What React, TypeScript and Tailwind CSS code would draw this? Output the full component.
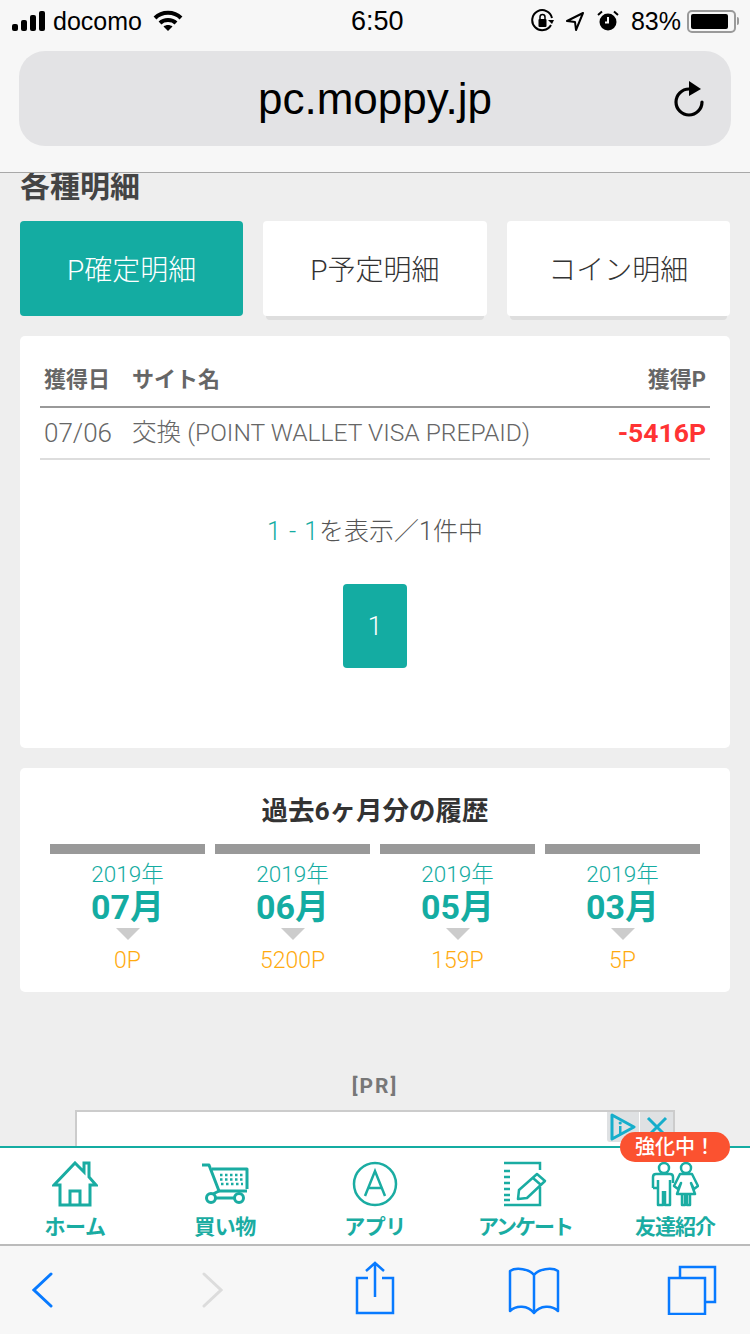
import React from 'react'

const jp = "font-['Roboto','Noto_Sans_CJK_JP',sans-serif]"

function StatusBar() {
  return (
    <div className="flex h-[42px] items-center pl-3 pr-[11px] font-['Liberation_Sans',sans-serif] text-[25px] leading-none text-black">
      <div className="flex w-[339px] items-center">
        <svg width="36" height="22" viewBox="0 0 36 22" fill="#000">
          <rect x="0" y="14" width="6" height="7" rx="2" />
          <rect x="9" y="10" width="6" height="11" rx="2" />
          <rect x="18" y="5" width="6" height="16" rx="2" />
          <rect x="27" y="1" width="6" height="20" rx="2" />
        </svg>
        <span className="ml-[5px]">docomo</span>
        <svg className="ml-[11px]" width="30" height="22" viewBox="0 0 30 22" fill="none" stroke="#000" strokeWidth="4">
          <path d="M2 8 C9 1 21 1 28 8" />
          <path d="M7 13 C11 9 19 9 23 13" />
          <path d="M15 21 L10.5 16.5 C13 14.5 17 14.5 19.5 16.5 Z" fill="#000" stroke="none" />
        </svg>
      </div>
      <span className="text-[27px] font-medium">6:50</span>
      <div className="flex flex-1 items-center justify-end">
        <svg width="24" height="24" viewBox="0 0 24 24" fill="none" stroke="#000" strokeWidth="2">
          <path d="M20 16 A10 10 0 1 1 21 9" />
          <path d="M21 15 L17 11 L23 11 Z" fill="#000" stroke="none" />
          <rect x="7.5" y="10" width="8" height="8" rx="1" fill="#000" stroke="none" />
          <path d="M9 10 V8 a2.5 2.5 0 0 1 5 0 V10" strokeWidth="1.5" />
        </svg>
        <svg className="ml-[10px]" width="20" height="22" viewBox="0 0 20 22" fill="none" stroke="#000" strokeWidth="2">
          <path d="M18 3 L2 11 L10 12 L11 20 Z" strokeLinejoin="round" />
        </svg>
        <svg className="ml-[12px]" width="22" height="22" viewBox="0 0 22 22">
          <circle cx="11" cy="12" r="8.5" fill="#000" />
          <path d="M11 7 V12.5 H8" fill="none" stroke="#f7f7f7" strokeWidth="2" />
          <path d="M1 5 L5 1.5 M21 5 L17 1.5" stroke="#000" strokeWidth="2" />
        </svg>
        <span className="ml-[12px]">83%</span>
        <div className="ml-[6px] flex h-[23px] w-[49px] items-center rounded-[5px] border-2 border-[#9a9a9a] p-[2px]">
          <div className="h-full w-[37px] rounded-[2px] bg-black" />
        </div>
        <div className="ml-[1px] h-[8px] w-[2px] rounded-r bg-[#9a9a9a]" />
      </div>
    </div>
  )
}

function UrlBar() {
  return (
    <div className="relative mx-[19px] mt-[9px] flex h-[95px] items-center justify-center rounded-[26px] bg-[#e3e3e5]">
      <span className="font-['Liberation_Sans',sans-serif] text-[44px] leading-none text-black">pc.moppy.jp</span>
      <svg className="absolute right-[25px] top-[28px]" width="32" height="40" viewBox="0 0 32 40" fill="none">
        <path d="M15 9 A13 13 0 1 0 28 22" stroke="#000" strokeWidth="3.2" strokeLinecap="round" transform="translate(0 1)" />
        <path d="M15 2 L27 10 L15 17 Z" fill="#000" />
      </svg>
    </div>
  )
}

function Tabs() {
  const tabs = ['P確定明細', 'P予定明細', 'コイン明細']
  return (
    <div className="mx-[20px] mt-[18px] grid grid-cols-3 gap-[20px]">
      {tabs.map((t, i) => (
        <div key={t} className="relative h-[95px]">
          {i > 0 && <div className="absolute -bottom-[4px] left-[3px] right-[3px] h-[6px] rounded-b bg-[#dedede]" />}
          <div
            className={
              i === 0
                ? 'relative flex h-full items-center justify-center rounded-[4px] bg-[#14aca2] pt-[4px] text-[28px] font-light text-white'
                : 'relative flex h-full items-center justify-center rounded-[4px] bg-white pt-[4px] text-[28px] font-light text-[#333]'
            }
          >
            {t}
          </div>
        </div>
      ))}
    </div>
  )
}

function DetailCard() {
  return (
    <div className="mx-[20px] mt-[20px] h-[412px] rounded-[5px] bg-white px-[20px]">
      <div className="flex h-[72px] items-end justify-between border-b-2 border-[#999] px-[4px] pb-[11px] text-[22px] leading-[30px] font-bold text-[#666]">
        <div className="flex">
          <span className="w-[88px]">獲得日</span>
          <span>サイト名</span>
        </div>
        <span>獲得P</span>
      </div>
      <div className="flex h-[52px] items-center justify-between border-b-2 border-[#ddd] px-[4px] text-[#666]">
        <div className="flex items-center font-light">
          <span className="w-[88px] text-[26px]">07/06</span>
          <span className="text-[24.6px]">交換 (POINT WALLET VISA PREPAID)</span>
        </div>
        <span className="text-[26.5px] font-bold text-[#ff3333]">-5416P</span>
      </div>
      <p className="mt-[54px] text-center text-[25px] leading-[36px] font-light text-[#555]">
        <span className="tracking-[1px] text-[#14aca2]">1 - 1</span>を表示／1件中
      </p>
      <div className="mt-[34px] flex justify-center">
        <div className="flex h-[84px] w-[64px] items-center justify-center rounded-[4px] bg-[#14aca2] text-[26px] font-light text-white">
          1
        </div>
      </div>
    </div>
  )
}

function HistoryCard() {
  const months = [
    { m: '07月', p: '0P' },
    { m: '06月', p: '5200P' },
    { m: '05月', p: '159P' },
    { m: '03月', p: '5P' },
  ]
  return (
    <div className="mx-[20px] mt-[20px] h-[224px] rounded-[5px] bg-white px-[30px] pt-[24px]">
      <h2 className="text-center text-[26.5px] leading-[38px] font-bold text-[#333]">過去6ヶ月分の履歴</h2>
      <div className="mt-[14px] grid grid-cols-4 gap-[10px]">
        {months.map((x) => (
          <div key={x.m} className="flex flex-col items-center">
            <div className="h-[10px] w-full bg-[#999]" />
            <span className="mt-[7px] text-[22.5px] leading-[26px] font-light text-[#14aca2]">2019年</span>
            <span className="mt-[1px] text-[34px] leading-[38px] font-bold text-[#14aca2]">{x.m}</span>
            <div className="mt-[2px] h-0 w-0 border-x-[12px] border-t-[12px] border-x-transparent border-t-[#ccc]" />
            <span className="mt-[7px] text-[23px] leading-[28px] font-light text-[#ffab10]">{x.p}</span>
          </div>
        ))}
      </div>
    </div>
  )
}

function AdBanner() {
  return (
    <div className="mt-[79px] flex flex-col items-center">
      <span className="text-[21px] leading-[30px] font-bold tracking-[2px] text-[#777]">[PR]</span>
      <div className="relative mt-[9px] h-[60px] w-[600px] border-2 border-b-0 border-[#ccc] bg-white">
        <div className="absolute right-0 top-0 flex h-[30px]">
          <div className="flex w-[32px] items-center justify-center rounded-bl-[3px] bg-[#dfe1e3]">
            <svg width="26" height="28" viewBox="0 0 26 28" fill="none">
              <path d="M2 2 L24 14 L2 26 Z" stroke="#16aecb" strokeWidth="3" strokeLinejoin="round" />
              <rect x="9" y="13" width="2.5" height="8" fill="#16aecb" />
              <circle cx="10.2" cy="10" r="1.6" fill="#16aecb" />
            </svg>
          </div>
          <div className="ml-[1px] flex w-[33px] items-start justify-center bg-[#dfe1e3] pt-[3px]">
            <svg width="24" height="24" viewBox="0 0 24 24" stroke="#16aecb" strokeWidth="3">
              <path d="M3 3 L21 21 M21 3 L3 21" />
            </svg>
          </div>
        </div>
      </div>
    </div>
  )
}

const teal = '#1aaca2'

const HomeIcon = () => (
  <svg width="46" height="46" viewBox="0 0 46 46" fill="none" stroke={teal} strokeWidth="3">
    <path d="M2 24 L23 2 L32 11 V2 H37 V16 L44 24 H38 V44 H8 V24 Z" strokeLinejoin="miter" />
    <path d="M18 44 V30 H28 V44" />
  </svg>
)

const CartIcon = () => (
  <svg width="48" height="42" viewBox="0 0 48 42" fill="none" stroke={teal} strokeWidth="3">
    <path d="M1 2 H8 L18 28 H46 M11 6 H46 V26" strokeLinejoin="round" />
    <circle cx="10" cy="35" r="4.5" />
    <circle cx="38" cy="35" r="4.5" />
    <path d="M15 35 H33 M18 28 L12 31" />
    <path d="M19 12 H42 M19 16.5 H42 M20 21 H42" strokeWidth="2.5" strokeDasharray="2.5 2.5" />
  </svg>
)

const AppIcon = () => (
  <svg width="46" height="46" viewBox="0 0 46 46" fill="none" stroke={teal} strokeWidth="2.5">
    <circle cx="23" cy="23" r="21" />
    <path d="M13 35 L23 10 L33 35 M16 27 H30" />
  </svg>
)

const SurveyIcon = () => (
  <svg width="44" height="46" viewBox="0 0 44 46" fill="none" stroke={teal} strokeWidth="2.5">
    <path d="M1 2 H37 V9 M37 26 V44 H1" />
    <path d="M1 10 H7 M1 16 H7 M1 22 H7 M1 28 H7 M1 34 H7 M1 39 H7" />
    <path d="M16 29 L34 13 L42 20 L24 37 L15 38 Z" strokeLinejoin="round" />
    <path d="M30 17 L38 24" />
  </svg>
)

const FriendsIcon = () => (
  <svg width="48" height="46" viewBox="0 0 48 46" fill="none" stroke={teal} strokeWidth="2.5" strokeLinejoin="round">
    <circle cx="13" cy="7" r="5" />
    <path d="M2 27 V16 Q2 13 5 13 H19 Q22 13 22 16 V22 M2 27 H7 V19 M7 27 V44 H12 V30 M14 30 V44 H19 V19" />
    <circle cx="35" cy="7" r="5" />
    <path d="M29 13 H41 L47 25 L43 28 L40 22 L44 33 H26 L30 22 L27 28 L23 25 Z" />
    <path d="M31 33 V44 H34 V33 M36 33 V44 H39 V33" />
  </svg>
)

function AppNav() {
  const items = [
    { label: 'ホーム', icon: <HomeIcon />, cls: 'tracking-[-0.5px]' },
    { label: '買い物', icon: <CartIcon />, cls: 'tracking-[-0.5px]' },
    { label: 'アプリ', icon: <AppIcon />, cls: 'tracking-[-0.5px]' },
    { label: 'アンケート', icon: <SurveyIcon />, cls: 'tracking-[-2px]' },
    { label: '友達紹介', icon: <FriendsIcon />, cls: 'tracking-[-1px]' },
  ]
  return (
    <div className="relative h-[100px] shrink-0 border-y-2 border-t-[#14aca2] border-b-[#bbb] bg-white">
      <div className="grid h-full grid-cols-5">
        {items.map((it) => (
          <div key={it.label} className="flex flex-col items-center pt-[13px]">
            <div className="flex h-[46px] items-center">{it.icon}</div>
            <span className={`mt-[7px] text-[21px] leading-[26px] font-bold text-[#1aaca2] ${it.cls}`}>{it.label}</span>
          </div>
        ))}
      </div>
      <div className="absolute -top-[16px] right-[20px] flex h-[30px] w-[110px] items-center justify-center rounded-full bg-[#fb5230] text-[20px] font-medium text-white">
        強化中！
      </div>
    </div>
  )
}

function SafariToolbar() {
  const blue = '#087aff'
  return (
    <div className="flex h-[88px] shrink-0 items-center bg-[#f7f7f7] pl-[32px]">
      <svg width="21" height="36" viewBox="0 0 21 36" fill="none" stroke={blue} strokeWidth="3" strokeLinecap="round">
        <path d="M19 2 L2 18 L19 34" />
      </svg>
      <svg className="ml-[149px]" width="21" height="36" viewBox="0 0 21 36" fill="none" stroke="#dcdcdc" strokeWidth="3" strokeLinecap="round">
        <path d="M2 2 L19 18 L2 34" />
      </svg>
      <svg className="ml-[132px] -mt-[4px]" width="40" height="54" viewBox="0 0 40 54" fill="none" stroke={blue} strokeWidth="2.5">
        <path d="M13 17 H2 V52 H38 V17 H27 M20 36 V2 M11 10 L20 2 L29 10" />
      </svg>
      <svg className="ml-[113px] mt-[2px]" width="52" height="48" viewBox="0 0 52 48" fill="none" stroke={blue} strokeWidth="2.5" strokeLinejoin="round">
        <path d="M26 8 C22 2 8 0 2 4 V44 C8 38 20 38 26 46 C32 38 44 38 50 44 V4 C44 0 30 2 26 8 Z M26 8 V46" />
      </svg>
      <svg className="ml-[107px]" width="50" height="50" viewBox="0 0 50 50" fill="none" stroke={blue} strokeWidth="2.5">
        <rect x="2" y="13" width="36" height="36" />
        <path d="M13 13 V2 H48 V37 H38" />
      </svg>
    </div>
  )
}

export default function App() {
  return (
    <div className={`flex h-[1334px] w-[750px] flex-col overflow-hidden bg-[#eee] ${jp}`}>
      <header className="h-[173px] shrink-0 border-b border-[#a8a8a8] bg-[#f7f7f7]">
        <StatusBar />
        <UrlBar />
      </header>
      <main className="min-h-0 flex-1 overflow-hidden">
        <h1 className="-mt-[2px] pl-[20px] text-[30px] leading-[32px] font-bold text-[#444]">各種明細</h1>
        <Tabs />
        <DetailCard />
        <HistoryCard />
        <AdBanner />
      </main>
      <AppNav />
      <SafariToolbar />
    </div>
  )
}
